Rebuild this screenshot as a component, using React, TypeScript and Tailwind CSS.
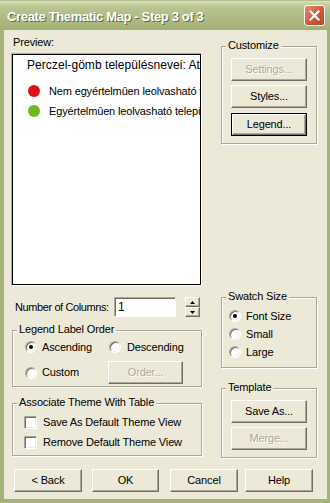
import React from "react";

function Btn({
  children,
  disabled,
  def,
  className = "",
}: {
  children: React.ReactNode;
  disabled?: boolean;
  def?: boolean;
  className?: string;
}) {
  return (
    <div className={`h-[23px] flex shrink-0 ${def ? "border border-black" : ""} ${className}`}>
      <div className="flex-1 flex items-center justify-center bg-[#ECE9D8] border border-t-white border-l-white border-r-[#716F64] border-b-[#716F64] shadow-[inset_-1px_-1px_0_#ACA899]">
        <span
          className={
            disabled ? "text-[#ACA899] [text-shadow:1px_1px_0_#fff]" : "text-black"
          }
        >
          {children}
        </span>
      </div>
    </div>
  );
}

function Radio({ checked }: { checked?: boolean }) {
  return (
    <span className="w-[12px] h-[12px] shrink-0 rounded-full bg-white border border-t-[#ACA899] border-l-[#ACA899] border-r-white border-b-white shadow-[inset_1px_1px_0_#716F64,inset_-1px_-1px_0_#F1EFE2] flex items-center justify-center">
      {checked && <span className="w-[4px] h-[4px] rounded-full bg-black" />}
    </span>
  );
}

function Check() {
  return (
    <span className="w-[13px] h-[13px] shrink-0 bg-white border border-t-[#ACA899] border-l-[#ACA899] border-r-white border-b-white shadow-[inset_1px_1px_0_#716F64,inset_-1px_-1px_0_#F1EFE2]" />
  );
}

function Group({
  label,
  className = "",
  children,
}: {
  label: string;
  className?: string;
  children?: React.ReactNode;
}) {
  return (
    <div
      className={`relative shrink-0 border border-[#ACA899] shadow-[1px_1px_0_#fff,inset_1px_1px_0_#fff] ${className}`}
    >
      <span className="absolute left-[4px] top-[-8px] px-[2px] leading-[13px] bg-[#ECE9D8]">
        {label}
      </span>
      {children}
    </div>
  );
}

export default function App() {
  return (
    <div className="w-[330px] h-[503px] flex flex-col overflow-hidden bg-[#A5B378] font-['Liberation_Sans',Arial,sans-serif] text-[11px] leading-[13px] text-black tracking-[-0.15px]">
      {/* Title bar */}
      <div className="h-[30px] shrink-0 flex items-start bg-[linear-gradient(to_bottom,#8E9D63_0px,#DCE3C0_1px,#CBD4A6_3px,#B8C38F_8px,#B1BC86_16px,#A7B479_26px,#A1AF72_30px)]">
        <span className="ml-[7px] mt-[9px] text-white font-bold text-[13px] leading-[15px] tracking-[-0.35px] [text-shadow:1px_1px_0_#5E6A3A]">
          Create Thematic Map - Step 3 of 3
        </span>
        <div className="ml-auto mr-[5px] mt-[5px] w-[21px] h-[21px] rounded-[3px] border border-white bg-[linear-gradient(135deg,#E88A6C,#D2583A_55%,#B9452A)] flex items-center justify-center">
          <svg width="11" height="11" viewBox="0 0 11 11">
            <path d="M1.5 1.5 L9.5 9.5 M9.5 1.5 L1.5 9.5" stroke="#fff" strokeWidth="2.2" strokeLinecap="square" />
          </svg>
        </div>
      </div>

      {/* Body with frame */}
      <div className="flex-1 flex flex-col ml-[4px] mr-[3px] mb-[4px] bg-[#ECE9D8]">
        <div className="flex pl-[7px]">
          {/* Left column */}
          <div className="w-[192px] flex flex-col pt-[6px]">
            <div className="pl-[2px] h-[13px]">Preview:</div>
            <div className="mt-[4px] w-[191px] h-[233px] border border-t-[#ACA899] border-l-[#ACA899] border-r-white border-b-white flex">
              <div className="flex-1 border border-black bg-white overflow-hidden whitespace-nowrap">
                <div className="pl-[14px] pt-[3px] text-[12px] leading-[14px] tracking-[0.05px]">
                  Perczel-gömb településnevei: At
                </div>
                <div className="mt-[9px] flex flex-col">
                  <div className="h-[20px] flex items-center pl-[15px]">
                    <span className="w-[12px] h-[12px] rounded-full bg-[#E01018] shrink-0" />
                    <span className="ml-[9px]">Nem egyértelmûen leolvasható t</span>
                  </div>
                  <div className="h-[20px] flex items-center pl-[15px]">
                    <span className="w-[12px] h-[12px] rounded-full bg-[#6FB81E] shrink-0" />
                    <span className="ml-[9px]">Egyértelmûen leolvasható telepü</span>
                  </div>
                </div>
              </div>
            </div>

            <div className="mt-[11px] h-[20px] flex items-center pl-[4px]">
              <span className="w-[99px] shrink-0 tracking-[-0.4px]">Number of Columns:</span>
              <div className="w-[62px] h-[20px] shrink-0 border border-t-[#ACA899] border-l-[#ACA899] border-r-white border-b-white shadow-[inset_1px_1px_0_#716F64] bg-white flex items-center pl-[3px] text-[12px]">
                1
              </div>
              <div className="ml-[9px] w-[15px] h-[20px] flex flex-col">
                <div className="h-[10px] flex items-center justify-center bg-[#ECE9D8] border border-t-white border-l-white border-r-[#716F64] border-b-[#716F64] shadow-[inset_-1px_-1px_0_#ACA899]">
                  <svg width="5" height="3" viewBox="0 0 5 3"><path d="M2.5 0 L5 3 L0 3Z" fill="#000" /></svg>
                </div>
                <div className="h-[10px] flex items-center justify-center bg-[#ECE9D8] border border-t-white border-l-white border-r-[#716F64] border-b-[#716F64] shadow-[inset_-1px_-1px_0_#ACA899]">
                  <svg width="5" height="3" viewBox="0 0 5 3"><path d="M0 0 L5 0 L2.5 3Z" fill="#000" /></svg>
                </div>
              </div>
            </div>

            <Group label="Legend Label Order" className="mt-[13px] ml-[1px] w-[190px] h-[57px]">
              <div className="pt-[7px] pl-[12px] flex flex-col">
                <div className="h-[18px] flex items-center">
                  <div className="w-[84px] flex items-center">
                    <Radio checked />
                    <span className="ml-[5px]">Ascending</span>
                  </div>
                  <Radio />
                  <span className="ml-[6px]">Descending</span>
                </div>
                <div className="mt-[5px] h-[23px] flex items-center">
                  <div className="w-[83px] flex items-center">
                    <Radio />
                    <span className="ml-[5px]">Custom</span>
                  </div>
                  <Btn disabled className="w-[75px]">Order...</Btn>
                </div>
              </div>
            </Group>

            <Group label="Associate Theme With Table" className="mt-[16px] ml-[1px] w-[190px] h-[53px]">
              <div className="pt-[8px] pl-[11px] flex flex-col">
                <div className="h-[20px] flex items-center">
                  <Check />
                  <span className="ml-[6px]">Save As Default Theme View</span>
                </div>
                <div className="h-[20px] flex items-center">
                  <Check />
                  <span className="ml-[6px]">Remove Default Theme View</span>
                </div>
              </div>
            </Group>
          </div>

          {/* Right column */}
          <div className="ml-[18px] w-[96px] flex flex-col">
            <Group label="Customize" className="mt-[16px] h-[98px]">
              <div className="pt-[11px] pl-[9px] flex flex-col">
                <Btn disabled className="w-[76px]">Settings...</Btn>
                <Btn className="w-[76px] mt-[4px]">Styles...</Btn>
                <Btn def className="w-[76px] mt-[5px]">Legend...</Btn>
              </div>
            </Group>

            <Group label="Swatch Size" className="mt-[153px] h-[71px]">
              <div className="pt-[9px] pl-[7px] flex flex-col">
                <div className="h-[18px] flex items-center">
                  <Radio checked />
                  <span className="ml-[5px]">Font Size</span>
                </div>
                <div className="h-[18px] flex items-center">
                  <Radio />
                  <span className="ml-[5px]">Small</span>
                </div>
                <div className="h-[18px] flex items-center">
                  <Radio />
                  <span className="ml-[5px]">Large</span>
                </div>
              </div>
            </Group>

            <Group label="Template" className="mt-[20px] h-[70px]">
              <div className="pt-[11px] pl-[9px] flex flex-col">
                <Btn className="w-[76px]">Save As...</Btn>
                <Btn disabled className="w-[76px] mt-[4px]">Merge...</Btn>
              </div>
            </Group>
          </div>
        </div>

        {/* Bottom buttons */}
        <div className="mt-[11px] flex pl-[10px]">
          <Btn className="w-[68px]">&lt; Back</Btn>
          <Btn className="w-[67px] ml-[10px]">OK</Btn>
          <Btn className="w-[68px] ml-[11px]">Cancel</Btn>
          <Btn className="w-[68px] ml-[7px]">Help</Btn>
        </div>
      </div>
    </div>
  );
}
